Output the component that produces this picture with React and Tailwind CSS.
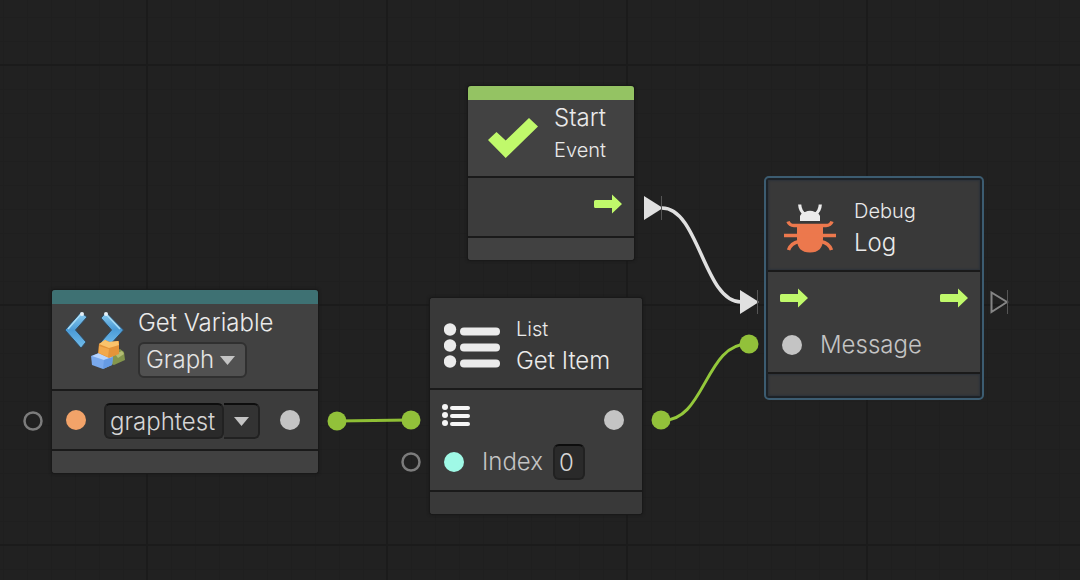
import React from "react";

const NODE =
  "absolute flex flex-col rounded-[3px] bg-[#3c3c3c] overflow-hidden shadow-[0_0_0_1px_#191919,0_0_3px_1px_#181818]";
const TITLE = "text-[24px] leading-[30px] text-[#eaeaea] whitespace-nowrap";
const SUBTITLE = "text-[20px] leading-[30px] text-[#eaeaea] whitespace-nowrap";
const LABEL = "text-[24px] leading-[30px] text-[#c4c4c4] whitespace-nowrap";

function Dot({ className }) {
  return <span className={"block size-5 shrink-0 rounded-full " + className} />;
}

function FlowArrow() {
  return (
    <svg width="28" height="20" viewBox="0 0 28 20" className="block shrink-0" aria-hidden="true">
      <path d="M1.5 6H18V0.5L28 10L18 19.5V14H1.5Q0 14 0 12.5V7.5Q0 6 1.5 6Z" fill="#c0f96b" />
    </svg>
  );
}

function ListIcon({ className }) {
  return (
    <svg viewBox="0 0 56 46" className={"block shrink-0 " + className} fill="#ebebeb" aria-hidden="true">
      <circle cx="6" cy="6.5" r="6.2" />
      <circle cx="6" cy="22.5" r="6.2" />
      <circle cx="6" cy="38.5" r="6.2" />
      <rect x="16" y="4.5" width="40" height="8" rx="4" />
      <rect x="16" y="20.5" width="40" height="8" rx="4" />
      <rect x="16" y="36.5" width="40" height="8" rx="4" />
    </svg>
  );
}

function SmallListIcon() {
  return (
    <svg width="28" height="22" viewBox="0 0 28 22" className="block shrink-0" fill="#f5f5f5" aria-hidden="true">
      <circle cx="3" cy="3" r="3" />
      <circle cx="3" cy="11" r="3" />
      <circle cx="3" cy="19" r="3" />
      <rect x="8" y="2" width="20" height="4" rx="2" />
      <rect x="8" y="10" width="20" height="4" rx="2" />
      <rect x="8" y="18" width="20" height="4" rx="2" />
    </svg>
  );
}

function CheckIcon() {
  return (
    <svg width="50" height="40" viewBox="0 0 50 40" className="block shrink-0" aria-hidden="true">
      <path d="M0 22L8.5 14L17.7 22.5L41 0L50 8.5L17.7 40Z" fill="#c0f96b" />
    </svg>
  );
}

function BugIcon() {
  return (
    <svg width="52" height="49" viewBox="0 0 52 49" className="block shrink-0" aria-hidden="true">
      <path d="M16 17V12Q17.5 8.5 21 8Q26 5.5 31 8Q34.5 8.5 36 12V17Z" fill="#ebebeb" />
      <path d="M15.7 0.5Q16 7 21 10.5M36.3 0.5Q36 7 31 10.5" fill="none" stroke="#ebebeb" strokeWidth="3.2" />
      <path d="M13 20H39V35Q39 48.5 26 48.5Q13 48.5 13 35Z" fill="#ec784d" />
      <path
        d="M4 17.5Q5.5 21.5 10 21.5H42Q46.500 21.500 48 17.500M0 31.500H52M15 37.500Q7 39 4.500 46M37 37.500Q45 39 47.500 46"
        fill="none"
        stroke="#ec784d"
        strokeWidth="3.5"
      />
    </svg>
  );
}

function VariableIcon() {
  return (
    <svg width="62" height="60" viewBox="0 0 62 60" className="block shrink-0" aria-hidden="true">
      <defs>
        <linearGradient id="chevron" x1="0" y1="0" x2="0" y2="1">
          <stop offset="0" stopColor="#8ccdf0" />
          <stop offset="0.5" stopColor="#4b9bd6" />
          <stop offset="1" stopColor="#72bdeb" />
        </linearGradient>
      </defs>
      <path d="M17 0.500L23 5L11.500 18L22 30L17 36L1 18Z" fill="url(#chevron)" stroke="#30495e" strokeWidth="1" />
      <path d="M42 0.500L59.500 18L45 34L37 30L47.500 18L37 6Z" fill="url(#chevron)" stroke="#30495e" strokeWidth="1" />
      <path d="M16.500 2.500L4 17M42.500 2.500L56 17" stroke="#a8dcf5" strokeWidth="1.500" />
      <circle cx="18" cy="2" r="2" fill="#e6f0f7" />
      <circle cx="42" cy="2" r="2" fill="#e6f0f7" />
      <path d="M44 42L56 37L60 40L61 48L50 53L44 51Z" fill="#84964c" />
      <path d="M51 42L58 39L60 42L54 46Z" fill="#b3bd73" />
      <path d="M27 44L35 41L49 44L48 53L39 57L28 53Z" fill="#79a9ed" />
      <path d="M28 44L35 41L49 45L40 48Z" fill="#b7d5ff" />
      <path d="M40 48L49 45L48 53L39 57Z" fill="#669be4" />
      <path d="M35 32L41 28L46 30L55 29V42L45 46L34 41Z" fill="#e49439" />
      <path d="M35 32L41 28L45 30L54 29L55 33L45 36Z" fill="#fac36b" />
      <path d="M35 34L45 37L44 45L35 41Z" fill="#f2a94c" />
    </svg>
  );
}

function Caret() {
  return (
    <svg width="15" height="9" viewBox="0 0 15 9" className="block" aria-hidden="true">
      <path d="M0 0H15L7.500 9Z" fill="#c4c4c4" />
    </svg>
  );
}

function Footer() {
  return <div className="h-[24px] border-t-2 border-[#1a1a1a] bg-[#414141]" />;
}

function Wires() {
  return (
    <svg className="pointer-events-none absolute left-0 top-0 size-full overflow-visible" aria-hidden="true">
      <g fill="none">
        <path d="M662 208C699 208 704 302 741 302" stroke="#e0e0e0" strokeWidth="3.500" />
        <path d="M337 421L411 420" stroke="#8fbf35" strokeWidth="3" />
        <path d="M661 420C705 424 705 342 749 344" stroke="#94c83b" strokeWidth="3" />
      </g>
      <g fill="#e0e0e0">
        <path d="M644 196L663 208L644 220Z" />
        <path d="M740 290L759 302L740 314Z" />
      </g>
      <path d="M991.500 292.500L1007 302L991.500 312Z" fill="none" stroke="#858585" strokeWidth="2" />
      <path d="M661.500 196V220M757.500 290V314M1007.500 290V314" stroke="#555555" />
      <g fill="#92c13a">
        <circle cx="337" cy="421" r="9.500" />
        <circle cx="411" cy="420" r="9.500" />
        <circle cx="661" cy="420" r="9.500" />
        <circle cx="749" cy="344" r="9.500" />
      </g>
      <g fill="none" stroke="#7c7c7c" strokeWidth="2.500">
        <circle cx="33" cy="421" r="8.500" />
        <circle cx="411" cy="462" r="8.500" />
      </g>
    </svg>
  );
}

export default function App() {
  return (
    <main className="relative min-h-screen w-full overflow-hidden bg-[#212121] font-['Inter','Liberation_Sans',sans-serif] font-light">
      <div className="absolute inset-0 bg-[linear-gradient(to_right,#1f1f1f_1px,transparent_1px),linear-gradient(to_bottom,#1f1f1f_1px,transparent_1px)] bg-[size:24px_24px] bg-[position:3px_17px]" />
      <div className="absolute inset-0 bg-[linear-gradient(to_right,#1b1b1b_2px,transparent_2px),linear-gradient(to_bottom,#1b1b1b_2px,transparent_2px)] bg-[size:240px_240px] bg-[position:146px_64px]" />
      <Wires />

      <section aria-label="Start Event" className={NODE + " left-[468px] top-[86px] w-[166px]"}>
        <div className="h-[14px] bg-[#94c363]" />
        <header className="flex h-[76px] items-center gap-4 bg-[#424242] pl-5">
          <CheckIcon />
          <div className="flex flex-col gap-0.5 pb-2">
            <h2 className={TITLE}>Start</h2>
            <p className={SUBTITLE}>Event</p>
          </div>
        </header>
        <div className="flex h-[60px] justify-end border-t-2 border-[#1a1a1a] pr-3 pt-4">
          <FlowArrow />
        </div>
        <Footer />
      </section>

      <section aria-label="Get Variable" className={NODE + " left-[52px] top-[290px] w-[266px]"}>
        <div className="h-[14px] bg-[#3e7173]" />
        <header className="flex h-[85px] gap-3 bg-[#414141] pl-3 pt-1">
          <div className="pt-1">
            <VariableIcon />
          </div>
          <div className="flex flex-col items-start gap-1">
            <h2 className={TITLE}>Get Variable</h2>
            <div className="relative">
              <select
                aria-label="Variable scope"
                className="block h-9 w-[109px] appearance-none rounded-md border-2 border-[#303030] bg-[#515151] pl-1.5 text-[24px] leading-[30px] text-[#e4e4e4] outline-none"
              >
                <option>Graph</option>
              </select>
              <span className="pointer-events-none absolute right-3 top-3.5">
                <Caret />
              </span>
            </div>
          </div>
        </header>
        <div className="flex h-[60px] items-center border-t-2 border-[#1a1a1a] pl-3.5 pr-[18px]">
          <Dot className="bg-[#f2a369]" />
          <div className="ml-[18px] mt-0.5 flex">
            <input
              type="text"
              aria-label="Variable name"
              defaultValue="graphtest"
              className="h-9 w-[120px] rounded-md border-2 border-[#212121] border-t-[#0d0d0d] bg-[#2a2a2a] pl-1 text-[24px] leading-[30px] text-[#d6d6d6] outline-none"
            />
            <button
              type="button"
              aria-label="Choose variable"
              className="flex h-9 w-9 items-center justify-center rounded-r-md border-y-2 border-r-2 border-[#212121] border-t-[#0d0d0d] bg-[#333333]"
            >
              <Caret />
            </button>
          </div>
          <Dot className="ml-auto bg-[#c4c4c4]" />
        </div>
        <Footer />
      </section>

      <section aria-label="List Get Item" className={NODE + " left-[430px] top-[298px] w-[212px]"}>
        <header className="flex h-[90px] items-center gap-4 bg-[#393939] pl-3.5">
          <ListIcon className="h-[46px] w-14 mt-1.5" />
          <div className="flex flex-col gap-0.5 pt-1">
            <p className={SUBTITLE}>List</p>
            <h2 className={TITLE}>Get Item</h2>
          </div>
        </header>
        <div className="flex h-[102px] flex-col gap-3.5 border-t-2 border-[#1a1a1a] pl-3 pr-[18px] pt-3.5">
          <div className="flex h-[30px] justify-between pb-1">
            <SmallListIcon />
            <div className="pt-1.5">
              <Dot className="bg-[#c4c4c4]" />
            </div>
          </div>
          <div className="flex h-7 items-center pl-0.5">
            <Dot className="bg-[#9ff9e6]" />
            <label htmlFor="item-index" className={LABEL + " ml-[18px]"}>
              Index
            </label>
            <input
              id="item-index"
              type="text"
              defaultValue="0"
              className="ml-2.5 h-9 w-8 rounded-md border-2 border-[#212121] border-t-[#0d0d0d] bg-[#2a2a2a] pl-1 text-[24px] leading-[30px] text-[#d6d6d6] outline-none"
            />
          </div>
        </div>
        <div className="h-[24px] border-t-2 border-[#1a1a1a] bg-[#393939]" />
      </section>

      <section
        aria-label="Debug Log"
        className="absolute left-[764px] top-[176px] w-[220px] rounded-[5px] border-2 border-[#3c5c71] bg-[#1d2227] p-0.5"
      >
        <header className="flex h-[90px] items-center gap-[18px] bg-[#393939] pl-4 shadow-[inset_0_0_2px_1px_#2c3239]">
          <div className="pt-1.5">
            <BugIcon />
          </div>
          <div className="flex flex-col gap-0.5 pt-1">
            <p className={SUBTITLE}>Debug</p>
            <h2 className={TITLE}>Log</h2>
          </div>
        </header>
        <div className="flex h-[102px] flex-col gap-[22px] border-t-2 border-[#1a1a1a] bg-[#3c3c3c] px-3 pt-4">
          <div className="flex justify-between">
            <FlowArrow />
            <FlowArrow />
          </div>
          <div className="flex items-center gap-[18px] pl-0.5">
            <Dot className="bg-[#c4c4c4]" />
            <span className={LABEL}>Message</span>
          </div>
        </div>
        <div className="h-[24px] border-t-2 border-[#1a1a1a] bg-[#393939] shadow-[inset_0_0_2px_1px_#2c3239]" />
      </section>
    </main>
  );
}
